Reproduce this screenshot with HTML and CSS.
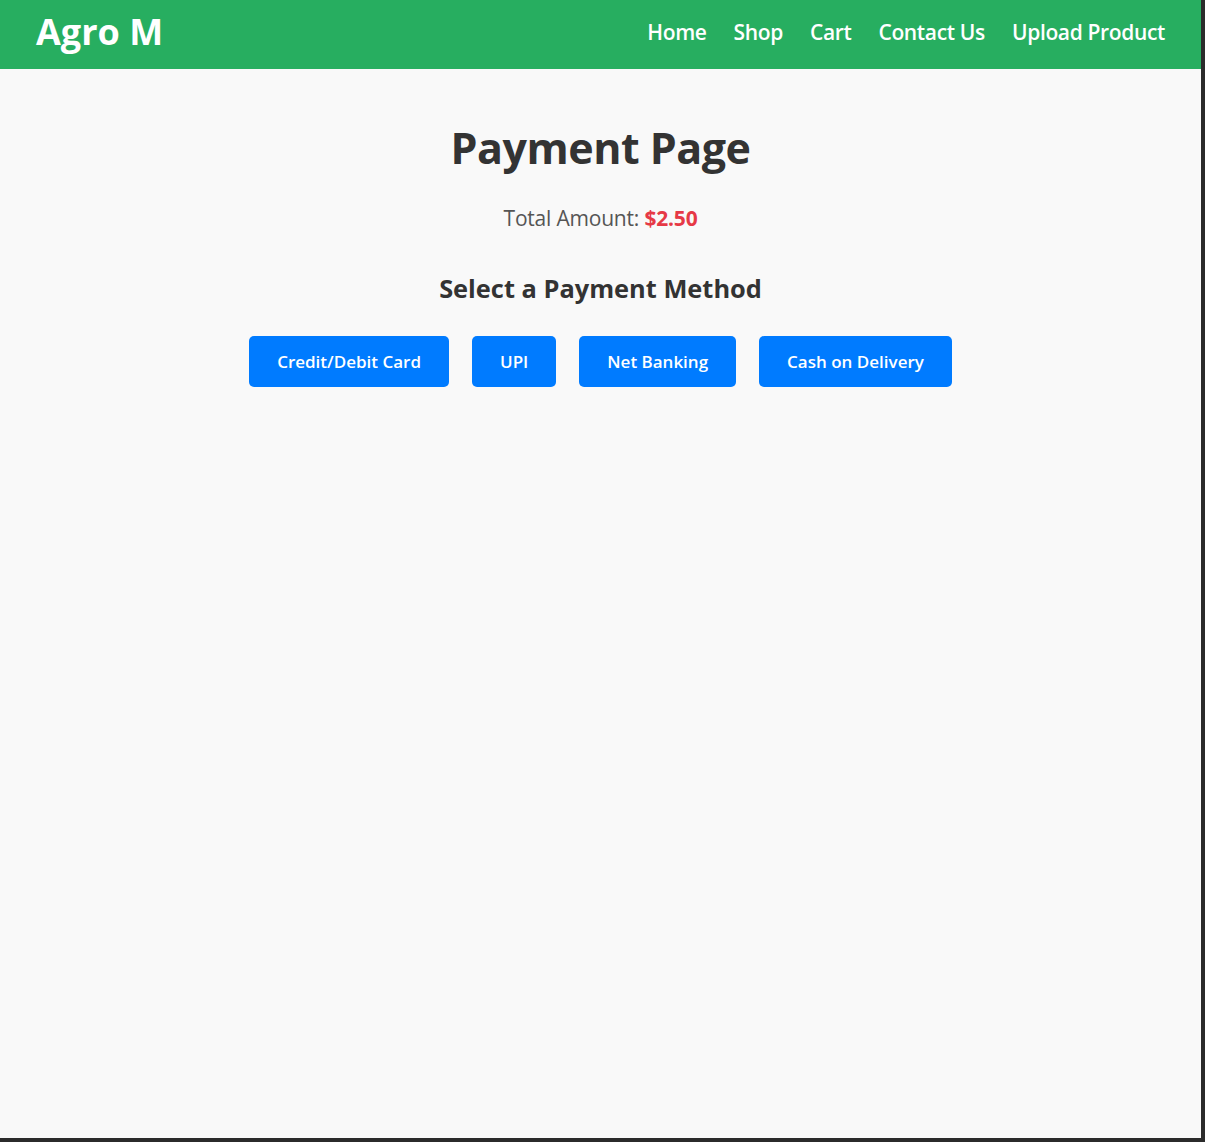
FILE: index.html
```html
<!DOCTYPE html>
<html lang="en">
<head>
<meta charset="utf-8">
<title>Payment Page - Agro M</title>
<link rel="stylesheet" href="styles.css">
</head>
<body>
<div class="frame">
  <header class="topbar">
    <div class="logo">Agro M</div>
    <nav class="nav">
      <a href="#">Home</a>
      <a href="#">Shop</a>
      <a href="#">Cart</a>
      <a href="#">Contact Us</a>
      <a href="#">Upload Product</a>
    </nav>
  </header>
  <main class="payment">
    <h1 class="title">Payment Page</h1>
    <p class="total">Total Amount: <span class="amount">$2.50</span></p>
    <h2 class="subtitle">Select a Payment Method</h2>
    <div class="methods">
      <button class="method">Credit/Debit Card</button>
      <button class="method">UPI</button>
      <button class="method">Net Banking</button>
      <button class="method">Cash on Delivery</button>
    </div>
  </main>
</div>
</body>
</html>
```
FILE: styles.css
```css
* { box-sizing: border-box; }
html, body { margin: 0; padding: 0; height: 100%; }
body {
  background: #2b2b2b;
  font-family: "Open Sans", "Noto Sans", sans-serif;
}
.frame {
  width: 1201px;
  height: 1138px;
  background: #f9f9f9;
  overflow: hidden;
}
.topbar {
  height: 69px;
  background: #27ae60;
  display: flex;
  align-items: center;
  justify-content: space-between;
  padding: 0 36px 5px;
  color: #fff;
}
.logo {
  font-size: 36px;
  line-height: 44px;
  font-weight: 700;
}
.nav {
  display: flex;
  gap: 27px;
}
.nav a {
  color: #fff;
  text-decoration: none;
  font-size: 21px;
  line-height: 28px;
  font-weight: 600;
  letter-spacing: -0.35px;
}
.payment {
  text-align: center;
  padding-top: 49px;
}
.title {
  margin: 0;
  font-size: 43px;
  line-height: 60px;
  font-weight: 700;
  color: #333;
  letter-spacing: -0.5px;
}
.total {
  margin: 27px 0 0;
  font-size: 21px;
  line-height: 26px;
  color: #555;
  letter-spacing: -0.2px;
}
.amount {
  color: #e63946;
  font-weight: 700;
}
.subtitle {
  margin: 42px 0 0;
  font-size: 25.4px;
  line-height: 30px;
  font-weight: 700;
  color: #333;
}
.methods {
  display: flex;
  justify-content: center;
  gap: 23px;
  margin-top: 33px;
}
.method {
  height: 51px;
  padding: 0 28px;
  border: none;
  border-radius: 5px;
  background: #007bff;
  color: #fff;
  font-family: inherit;
  font-size: 17px;
  font-weight: 600;
  cursor: pointer;
}
```
